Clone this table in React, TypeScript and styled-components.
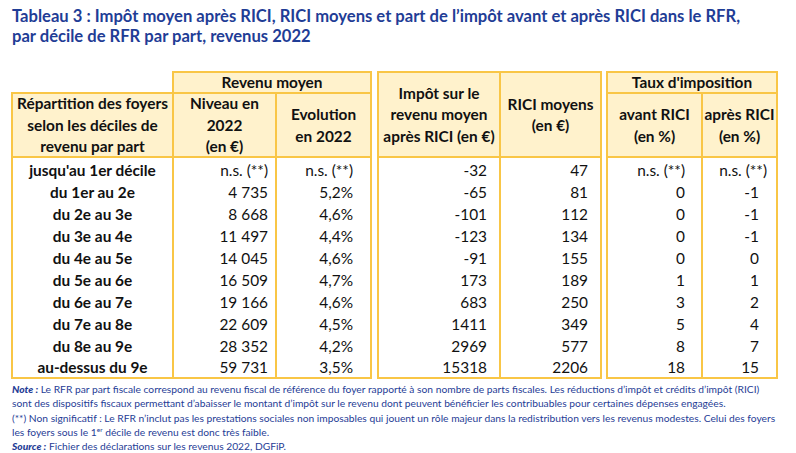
import React from "react";
import styled, { createGlobalStyle } from "styled-components";

const GOLD = "#f9c646";
const CREAM = "#fff2cc";
const BLUE = "#1f3d96";

const Global = createGlobalStyle`
  html, body { margin: 0; padding: 0; background: #ffffff; }
  body { width: 796px; height: 453px; overflow: hidden; }
`;

const Page = styled.div`
  padding: 6px 0 0 12px;
  box-sizing: border-box;
  width: 796px;
`;

const Title = styled.h1`
  margin: 0;
  font-family: Lato, "Open Sans", sans-serif;
  font-weight: 700;
  font-size: 16.6px;
  line-height: 20px;
  color: ${BLUE};
  white-space: nowrap;
`;

const Tables = styled.div`
  display: flex;
  align-items: flex-end;
  margin-top: 25px;
  margin-left: -1px;
  font-family: Lato, "Liberation Sans", sans-serif;
  font-size: 15.4px;
  color: #111;
`;

const Box = styled.div<{ $cols: string; $noRight?: boolean; $ml?: number }>`
  display: grid;
  grid-template-columns: ${(p) => p.$cols};
  border: 2px solid ${GOLD};
  ${(p) => (p.$noRight ? "border-right: none;" : "")}
  margin-left: ${(p) => p.$ml ?? 0}px;
`;

const Head = styled.div<{ $h: number; $span?: number; $sep?: boolean }>`
  grid-column: span ${(p) => p.$span ?? 1};
  height: ${(p) => p.$h}px;
  box-sizing: border-box;
  background: ${CREAM};
  border-bottom: 2px solid ${GOLD};
  border-left: ${(p) => (p.$sep ? `2px solid ${GOLD}` : "none")};
  display: flex;
  align-items: center;
  justify-content: center;
  text-align: center;
  font-weight: 700;
  line-height: 21.5px;
  padding-top: 1px;
  white-space: nowrap;
`;

const Cell = styled.div<{ $sep?: boolean; $pr?: number; $center?: boolean; $bold?: boolean }>`
  height: 21.9px;
  box-sizing: border-box;
  border-left: ${(p) => (p.$sep ? `2px solid ${GOLD}` : "none")};
  display: flex;
  align-items: center;
  justify-content: ${(p) => (p.$center ? "center" : "flex-end")};
  padding-right: ${(p) => p.$pr ?? 0}px;
  padding-top: 3px;
  font-weight: ${(p) => (p.$bold ? 700 : 400)};
  white-space: nowrap;
`;

const Notes = styled.div`
  margin-top: 3px;
  font-family: Lato, "Open Sans", sans-serif;
  font-size: 10.25px;
  line-height: 14.3px;
  color: ${BLUE};
  white-space: nowrap;
`;

const Lead = styled.b`
  font-style: italic;
  font-weight: 900;
`;

const Sup = styled.sup`
  font-size: 6.5px;
  line-height: 0;
`;

type Row = [string, string, string, string, string, string, string];

const rows: Row[] = [
  ["jusqu'au 1er décile", "n.s. (**)", "n.s. (**)", "-32", "47", "n.s. (**)", "n.s. (**)"],
  ["du 1er au 2e", "4 735", "5,2%", "-65", "81", "0", "-1"],
  ["du 2e au 3e", "8 668", "4,6%", "-101", "112", "0", "-1"],
  ["du 3e au 4e", "11 497", "4,4%", "-123", "134", "0", "-1"],
  ["du 4e au 5e", "14 045", "4,6%", "-91", "155", "0", "0"],
  ["du 5e au 6e", "16 509", "4,7%", "173", "189", "1", "1"],
  ["du 6e au 7e", "19 166", "4,6%", "683", "250", "3", "2"],
  ["du 7e au 8e", "22 609", "4,5%", "1411", "349", "5", "4"],
  ["du 8e au 9e", "28 352", "4,2%", "2969", "577", "8", "7"],
  ["au-dessus du 9e", "59 731", "3,5%", "15318", "2206", "18", "15"],
];

export default function App() {
  return (
    <Page>
      <Global />
      <Title>
        Tableau 3 : Impôt moyen après RICI, RICI moyens et part de l’impôt avant et après RICI dans le RFR,
        <br />
        par décile de RFR par part, revenus 2022
      </Title>
      <Tables>
        <Box $cols="159px" $noRight>
          <Head $h={64}>
            Répartition des foyers
            <br />
            selon les déciles de
            <br />
            revenu par part
          </Head>
          {rows.map((r) => (
            <Cell key={r[0]} $center $bold>
              {r[0]}
            </Cell>
          ))}
        </Box>
        <Box $cols="101px 95px">
          <Head $h={21} $span={2}>Revenu moyen</Head>
          <Head $h={64}>
            Niveau en
            <br />
            2022
            <br />
            (en €)
          </Head>
          <Head $h={64} $sep>
            Evolution
            <br />
            en 2022
          </Head>
          {rows.map((r) => (
            <React.Fragment key={r[0]}>
              <Cell $pr={7}>{r[1]}</Cell>
              <Cell $sep $pr={17}>{r[2]}</Cell>
            </React.Fragment>
          ))}
        </Box>
        <Box $cols="120px 101px" $ml={5}>
          <Head $h={85}>
            Impôt sur le
            <br />
            revenu moyen
            <br />
            après RICI (en €)
          </Head>
          <Head $h={85} $sep>
            RICI moyens
            <br />
            (en €)
          </Head>
          {rows.map((r) => (
            <React.Fragment key={r[0]}>
              <Cell $pr={12}>{r[3]}</Cell>
              <Cell $sep $pr={12}>{r[4]}</Cell>
            </React.Fragment>
          ))}
        </Box>
        <Box $cols="93px 75px" $ml={4}>
          <Head $h={21} $span={2}>Taux d'imposition</Head>
          <Head $h={64}>
            avant RICI
            <br />
            (en %)
          </Head>
          <Head $h={64} $sep>
            après RICI
            <br />
            (en %)
          </Head>
          {rows.map((r) => (
            <React.Fragment key={r[0]}>
              <Cell $pr={16}>{r[5]}</Cell>
              <Cell $sep $pr={r[6].startsWith("n.s.") ? 9 : 17}>{r[6]}</Cell>
            </React.Fragment>
          ))}
        </Box>
      </Tables>
      <Notes>
        <Lead>Note :</Lead> Le RFR par part fiscale correspond au revenu fiscal de référence du foyer rapporté à son nombre de parts fiscales. Les réductions d’impôt et crédits d’impôt (RICI)
        <br />
        sont des dispositifs fiscaux permettant d’abaisser le montant d’impôt sur le revenu dont peuvent bénéficier les contribuables pour certaines dépenses engagées.
        <br />
        (**) Non significatif : Le RFR n’inclut pas les prestations sociales non imposables qui jouent un rôle majeur dans la redistribution vers les revenus modestes. Celui des foyers
        <br />
        les foyers sous le 1<Sup>er</Sup> décile de revenu est donc très faible.
        <br />
        <Lead>Source :</Lead> Fichier des déclarations sur les revenus 2022, DGFiP.
      </Notes>
    </Page>
  );
}
